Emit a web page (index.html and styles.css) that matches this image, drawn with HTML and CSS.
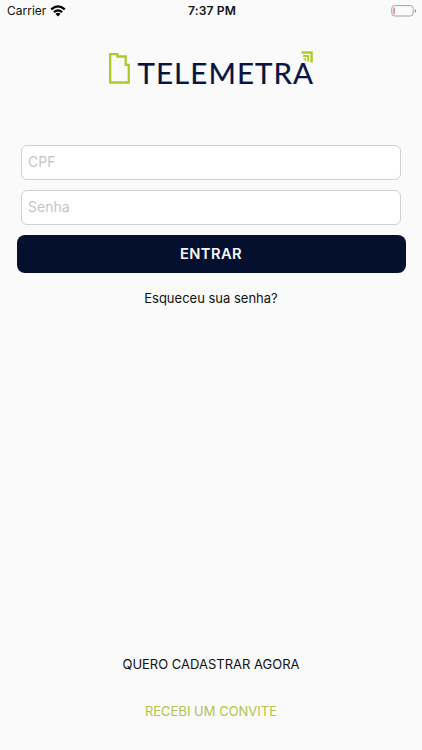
FILE: index.html
```html
<!DOCTYPE html>
<html lang="pt-BR">
<head>
<meta charset="utf-8">
<title>Telemetra</title>
<link rel="stylesheet" href="styles.css">
</head>
<body>
<div class="screen">
  <header class="status">
    <div class="carrier"><span class="carrier-name">Carrier</span>
      <svg class="wifi" width="16" height="12" viewBox="0 0 16 12" fill="none" stroke="#000" stroke-width="2.3"><path d="M1.2 4.3Q8-1.6 14.8 4.3M3.9 7.2Q8 3.5 12.1 7.2"/><path d="M5.5 8.9Q8 6.8 10.5 8.9L8 11.5Z" fill="#000" stroke="none"/></svg>
    </div>
    <span class="time">7:37 PM</span>
    <svg class="battery" width="26" height="12" viewBox="0 0 26 12"><rect x=".8" y=".6" width="21.4" height="10.4" rx="2.8" fill="none" stroke="#a2a2a2"/><rect x="2.2" y="2.5" width="1.8" height="6.8" rx=".8" fill="#f18c92"/><path d="M23.8 4v4Q25.2 7.4 25.2 6T23.8 4Z" fill="#999"/></svg>
  </header>
  <svg class="logo" width="206" height="42" viewBox="0 0 206 42" role="img" aria-label="Telemetra">
    <path d="M2.2 4.2H9.5V6.5H17.7V14.8H20.8V32.5H2.2Z" fill="none" stroke="#b3c827" stroke-width="2.3"/>
    <text class="wordmark" x="29.5" y="33.7" textLength="175.5" lengthAdjust="spacing">TELEMETRA</text>
    <g fill="none" stroke="#b3c827"><path d="M193.5 2.5H203.6V12.5" stroke-width="2.4"/><path d="M195 6H200.2V11.8" stroke-width="1.8"/><path d="M195.5 8.8H197.4V11" stroke-width="1.3"/></g>
  </svg>
  <form class="login">
    <input class="field" type="text" placeholder="CPF">
    <input class="field" type="password" placeholder="Senha">
    <button class="enter" type="button">ENTRAR</button>
  </form>
  <a class="forgot">Esqueceu sua senha?</a>
  <footer class="links">
    <a class="register">QUERO CADASTRAR AGORA</a>
    <a class="invite">RECEBI UM CONVITE</a>
  </footer>
</div>
</body>
</html>
```
FILE: styles.css
```css
* { box-sizing: border-box; }
body { margin: 0; background: #fafafa; color: #111; font-family: Inter, "Liberation Sans", sans-serif; }
.screen { width: 422px; height: 750px; display: flex; flex-direction: column; align-items: center; overflow: hidden; }
.status { width: 100%; height: 22px; padding: 0 5px 0 7px; display: grid; grid-template-columns: 1fr auto 1fr; align-items: center; font-size: 12.2px; line-height: 22px; }
.carrier { display: flex; align-items: center; gap: 4px; }
.carrier-name { font-size: 12px; }
.time { font-weight: 600; font-size: 12.1px; letter-spacing: .15px; }
.battery { justify-self: end; }
.logo { margin-top: 28px; display: block; overflow: visible; }
.wordmark { font-family: Lato, sans-serif; font-size: 29.5px; fill: #061441; stroke: #061441; stroke-width: .2px; }
.login { width: 390px; margin-top: 53px; display: flex; flex-direction: column; align-items: center; gap: 10.5px; }
.field { width: 380px; height: 34.5px; padding: 0 6px 2px; border: 1px solid #d0d0d0; border-radius: 6px; background: #fff; font: 14px Inter, sans-serif; }
.field::placeholder { color: #c4c4c6; opacity: 1; }
.enter { width: 389px; height: 38.5px; margin-top: -.5px; padding: 0; border: 0; border-radius: 8px; background: #04102d; color: #f7f9ff; font: 600 14.7px Inter, sans-serif; letter-spacing: .4px; }
.forgot { margin-top: 14.5px; font-size: 13px; line-height: 20px; }
.links { margin-top: auto; padding-bottom: 29px; display: flex; flex-direction: column; align-items: center; gap: 27px; font-size: 13px; line-height: 20px; }
.invite { color: #b3c24a; }
```
